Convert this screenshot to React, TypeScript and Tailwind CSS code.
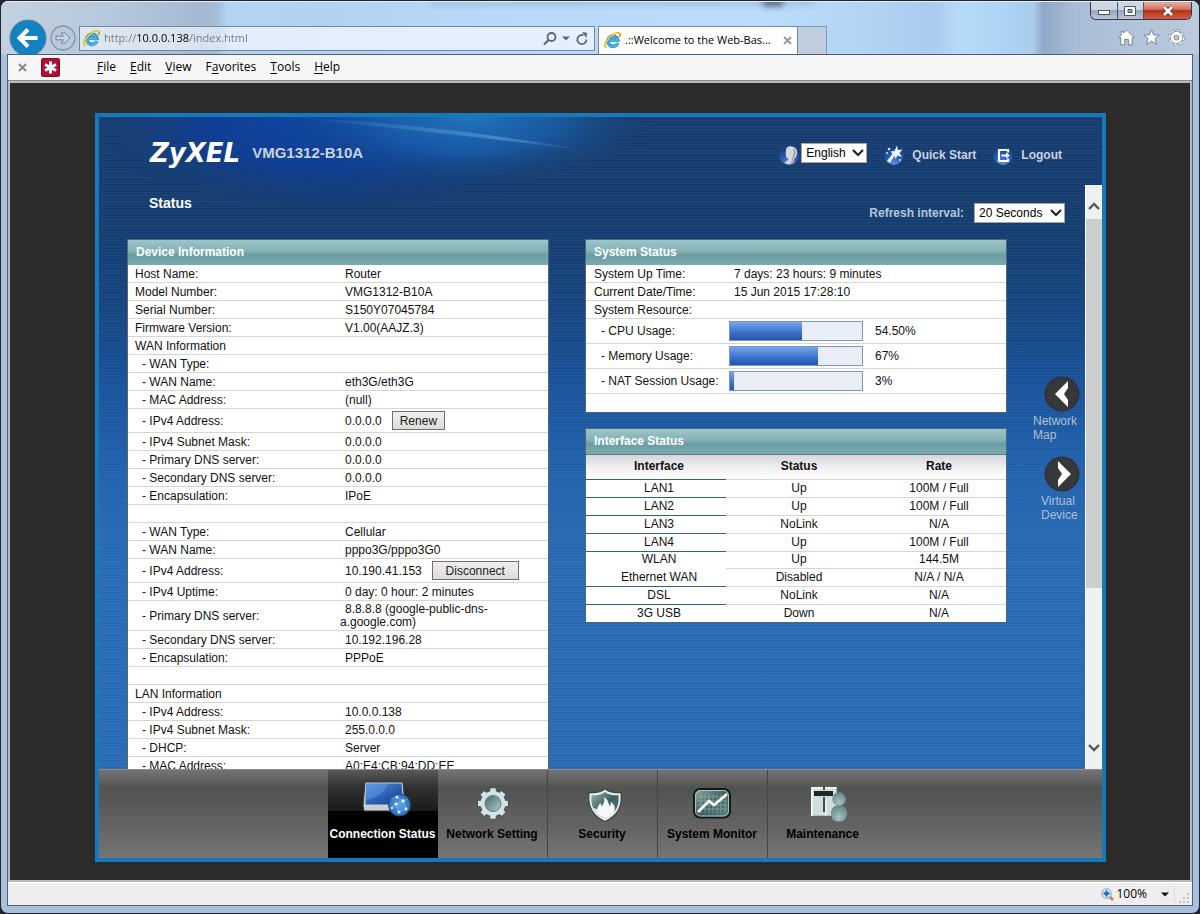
import type { ReactNode } from "react";

const rowLine = "border-b border-[#d6d6d6]";

function IELogo({ size = 20 }: { size?: number }) {
  return (
    <svg width={size} height={size} viewBox="0 0 20 20" aria-hidden="true" className="shrink-0">
      <path d="M16.2 12.8A6 6 0 1 1 16.3 9.6H6.2" fill="none" stroke="#1878b8" strokeWidth="4" />
      <path d="M16 12.8A6 6 0 1 1 16 9.8H6" fill="none" stroke="#48b4e8" strokeWidth="2.6" />
      <path
        d="M3.2 18.6C-.6 17.4 1.6 10.8 7 5.8C11.6 1.6 17.4-.2 18.6 2.2C19.2 3.4 18.8 5 18.2 6"
        fill="none"
        stroke="#c99a1c"
        strokeWidth="2"
      />
      <path
        d="M3.2 18.4C-.2 17.2 2 10.8 7.2 6C11.8 1.9 17.2.2 18.3 2.4"
        fill="none"
        stroke="#fbd53c"
        strokeWidth="1.4"
      />
    </svg>
  );
}

function Browser({ children }: { children: ReactNode }) {
  const menus: [string, string, string][] = [
    ["", "F", "ile"],
    ["", "E", "dit"],
    ["", "V", "iew"],
    ["F", "a", "vorites"],
    ["", "T", "ools"],
    ["", "H", "elp"],
  ];
  return (
    <div className="h-screen bg-[#20242e]">
      <div className="flex h-full flex-col overflow-hidden rounded-lg border border-[#20242e] bg-[#a9c1dc] font-['Open_Sans','Noto_Sans',sans-serif] text-[11px] text-black">
        <header className="relative flex h-[53px] shrink-0 overflow-hidden border-t border-[#e4eef8] bg-[linear-gradient(90deg,#c3d1df_0px,#b6c8dc_110px,#a3b9d2_205px,#a5bfda_217px,#b3d3f2_226px,#b2d2f2_330px,#b7d8f8_480px,#bbdcfb_760px,#b4d6f6_850px,#a9cbee_930px,#b6dafa_960px,#acd0f1_1020px,#a8caea_1033px,#8fa8c8_1042px,#a9bdd6_1075px,#bccbdd_1199px)] pl-[8px] pr-[7px]">
          <div className="absolute -top-1 left-[430px] h-2 w-96 bg-[#6a86a8] opacity-25 blur-[3px]" />
          <div className="absolute -top-1 left-[762px] h-2 w-5 bg-black opacity-50 blur-[3px]" />
          <button aria-label="Back" className="relative mt-[17px] size-[38px] shrink-0">
            <svg width="38" height="38" viewBox="0 0 38 38">
              <circle cx="19" cy="19" r="18" fill="#1183c2" stroke="#5f7f9e" strokeWidth="1" />
              <path d="M28.500 19H11.500M19 10.500L10.500 19L19 27.500" fill="none" stroke="#fff" strokeWidth="4" />
            </svg>
          </button>
          <button aria-label="Forward" className="relative ml-[3px] mt-[23px] size-[26px] shrink-0">
            <svg width="26" height="26" viewBox="0 0 26 26">
              <circle cx="13" cy="13" r="12" fill="#b9c9db" stroke="#8596ab" strokeWidth="1.4" />
              <path d="M6 11.200H13.500L11 8H15L20 13L15 18H11L13.500 14.800H6Z" fill="#c9d5e3" stroke="#73849b" strokeWidth="1" />
            </svg>
          </button>
          <form className="relative ml-[3px] mt-[24px] flex h-[25px] min-w-0 flex-1 items-center border border-[#7189a8] bg-[linear-gradient(90deg,#dee6ef_0px,#d9e3ef_140px,#e3eefa_150px,#e5f0fc_100%)] pl-[3px] pr-1">
            <IELogo size={17} />
            <input
              aria-label="Address"
              defaultValue="http://10.0.0.138/index.html"
              className="ml-1 min-w-0 flex-1 bg-[linear-gradient(90deg,#70777f_32px,#000_32px,#000_85px,#70777f_85px)] bg-clip-text text-[11px] text-transparent outline-none"
            />
            <button type="button" aria-label="Search" className="flex items-center gap-1">
              <svg width="16" height="16" viewBox="0 0 16 16">
                <circle cx="9.500" cy="6" r="4" fill="none" stroke="#5c6874" strokeWidth="1.800" />
                <path d="M6.500 9L2 13.500" stroke="#5c6874" strokeWidth="2.200" />
              </svg>
              <svg width="8" height="5" viewBox="0 0 8 5">
                <path d="M0 .5H8L4 4.500Z" fill="#5c6874" />
              </svg>
            </button>
            <button type="button" aria-label="Refresh" className="ml-1">
              <svg width="16" height="16" viewBox="0 0 16 16">
                <path d="M12.500 8.500A4.600 4.600 0 1 1 9.500 4.200" fill="none" stroke="#5c6874" strokeWidth="1.800" />
                <path d="M8 1L13 1.800L12.500 7Z" fill="#5c6874" />
              </svg>
            </button>
          </form>
          <div className="relative ml-[3px] mt-[24px] flex w-[200px] shrink-0 items-center border border-b-0 border-[#7189a8] bg-[#fdfdfe] px-[5px]">
            <IELogo size={17} />
            <span className="ml-1 flex-1 whitespace-nowrap text-[11px]">.::Welcome to the Web-Bas...</span>
            <button aria-label="Close tab">
              <svg width="9" height="9" viewBox="0 0 9 9">
                <path d="M1 1L8 8M8 1L1 8" stroke="#9a9a9a" strokeWidth="2" />
              </svg>
            </button>
          </div>
          <button aria-label="New tab" className="relative mt-[24px] w-[29px] shrink-0 border border-b-0 border-l-0 border-[#8298b3] bg-[#bfcddc]" />
          <div className="relative flex w-[365px] shrink-0 flex-col items-end">
            <div className="flex h-[18px] w-[102px] overflow-hidden rounded-b-md border border-t-0 border-[#31394a]">
              <button aria-label="Minimize" className="flex flex-1 items-center justify-center border-r border-[#4a5568] bg-[linear-gradient(#cdd7e4_45%,#96a6bd_50%,#b8c6d8)]">
                <svg width="12" height="12" viewBox="0 0 12 12">
                  <rect x=".5" y="5.500" width="11" height="4" fill="#fff" stroke="#4b5566" />
                </svg>
              </button>
              <button aria-label="Maximize" className="flex flex-1 items-center justify-center border-r border-[#4a5568] bg-[linear-gradient(#cdd7e4_45%,#96a6bd_50%,#b8c6d8)]">
                <svg width="12" height="12" viewBox="0 0 12 12">
                  <path d="M.5 1.500H11.500V10.500H.5ZM4 4.500V7.500H8V4.500Z" fill="#fff" fillRule="evenodd" stroke="#4b5566" />
                </svg>
              </button>
              <button aria-label="Close" className="flex w-[47px] items-center justify-center bg-[linear-gradient(#e0a596_10%,#cf6e58_45%,#b8311a_50%,#d15a41)]">
                <svg width="14" height="12" viewBox="0 0 14 12">
                  <path d="M3 2L11 10M11 2L3 10" stroke="#5a3030" strokeWidth="4.500" />
                  <path d="M3 2L11 10M11 2L3 10" stroke="#fff" strokeWidth="2.800" />
                </svg>
              </button>
            </div>
            <div className="mr-[7px] mt-[9px] flex gap-2">
              <button aria-label="Home">
                <svg width="17" height="17" viewBox="0 0 17 17">
                  <path d="M8.500 1L16.300 8.800H14.200V15.800H10.400V10.500H6.700V15.800H2.800V8.800H.7L3.200 6.300V2.500H5.500V4Z" fill="#fff" stroke="#6c7c92" strokeWidth=".9" />
                </svg>
              </button>
              <button aria-label="Favorites">
                <svg width="17" height="17" viewBox="0 0 17 17">
                  <path d="M8.500 .8L10.800 6H16.300L12 9.500L13.600 15.500L8.500 12L3.400 15.500L5 9.500L.7 6H6.200Z" fill="#fff" stroke="#6c7c92" strokeWidth=".9" />
                </svg>
              </button>
              <button aria-label="Tools">
                <svg width="17" height="17" viewBox="0 0 17 17">
                  <circle cx="8.500" cy="8.500" r="6.800" fill="none" stroke="#76869b" strokeWidth="3.200" strokeDasharray="3.100 2.240" />
                  <circle cx="8.500" cy="8.500" r="6.600" fill="none" stroke="#fff" strokeWidth="2.400" strokeDasharray="2.500 2.683" />
                  <circle cx="8.500" cy="8.500" r="4.300" fill="none" stroke="#76869b" strokeWidth="4.200" />
                  <circle cx="8.500" cy="8.500" r="4.300" fill="none" stroke="#fff" strokeWidth="2.900" />
                </svg>
              </button>
            </div>
          </div>
        </header>
        <div className="mx-[6px] mb-[7px] flex min-h-0 flex-1 flex-col border border-[#4d5f80] bg-[#f5f6f7]">
          <nav aria-label="Menu bar" className="flex h-[26px] shrink-0 items-center border-b border-[#8a8a8a] bg-[#f6f6f7] pl-[10px]">
            <button aria-label="Close toolbar">
              <svg width="9" height="9" viewBox="0 0 9 9">
                <path d="M1 1L8 8M8 1L1 8" stroke="#858585" strokeWidth="1.800" />
              </svg>
            </button>
            <button aria-label="Password manager" className="ml-[14px]">
              <svg width="19" height="19" viewBox="0 0 19 19">
                <rect width="19" height="19" rx="2.500" fill="#7e0a24" />
                <rect x="1" y="1" width="17" height="17" rx="2" fill="#b01036" />
                <path d="M9.500 3.500V15.500M4 6.500L15 12.500M4 12.500L15 6.500" stroke="#fff" strokeWidth="3" />
              </svg>
            </button>
            <ul className="ml-[37px] flex gap-[14px]">
              {menus.map(([pre, key, post]) => (
                <li key={key + post}>
                  <button className="text-[12px] leading-4">
                    {pre}
                    <span className="underline underline-offset-2">{key}</span>
                    {post}
                  </button>
                </li>
              ))}
            </ul>
          </nav>
          <div className="flex min-h-0 flex-1 flex-col border-2 border-[#b9b9b9] bg-[#2b2b2c] bg-[repeating-linear-gradient(0deg,transparent_0_3px,rgba(255,255,255,0.012)_3px_4px),repeating-linear-gradient(90deg,transparent_0_3px,rgba(0,0,0,0.05)_3px_4px)] pb-[18px] pl-[85px] pr-[84px] pt-[30px]">
            {children}
          </div>
          <footer className="flex h-[23px] shrink-0 items-center justify-end border-t border-white bg-[#efeeed] pr-px">
            <svg width="13" height="13" viewBox="0 0 13 13" aria-hidden="true">
              <path d="M8 8L12 12" stroke="#b98a5c" strokeWidth="2.600" />
              <circle cx="5.500" cy="5.500" r="4.800" fill="#d5ebfb" stroke="#7ea7c9" />
              <path d="M5.500 2.500V8.500M2.500 5.500H8.500" stroke="#1266b8" strokeWidth="2" />
            </svg>
            <button className="ml-[2px] flex items-center gap-[14px] text-[12px]">
              100%
              <svg width="8" height="5" viewBox="0 0 8 5">
                <path d="M0 .5H8L4 4.500Z" fill="#111" />
              </svg>
            </button>
            <span className="ml-[5px] h-4 w-px bg-[#dadada]" />
            <svg width="12" height="12" viewBox="0 0 12 12" aria-hidden="true" className="ml-1 mt-2">
              <path d="M8 1h2v2h-2zM8 5h2v2h-2zM8 9h2v2h-2zM4 5h2v2h-2zM4 9h2v2h-2zM0 9h2v2h-2z" fill="#c3c3c3" />
            </svg>
          </footer>
        </div>
      </div>
    </div>
  );
}

function Orb({ id, children }: { id: string; children: ReactNode }) {
  return (
    <svg width="22" height="22" viewBox="0 0 22 22" aria-hidden="true" className="shrink-0">
      <defs>
        <radialGradient id={id} cx=".5" cy=".95" r=".85">
          <stop offset="0" stopColor="#5b8fe0" />
          <stop offset=".5" stopColor="#2b5cb4" />
          <stop offset="1" stopColor="#173f7c" />
        </radialGradient>
      </defs>
      <circle cx="11" cy="11" r="10" fill={`url(#${id})`} />
      {children}
    </svg>
  );
}

function Picker({ id, label, options, width }: { id: string; label?: string; options: string[]; width: string }) {
  return (
    <span className={`relative inline-flex h-5 ${width}`}>
      <select
        id={id}
        aria-label={label}
        className="h-full w-full appearance-none border border-[#a4a4a4] bg-white pl-1 text-[12px] leading-4 font-normal text-black"
      >
        {options.map((o) => (
          <option key={o}>{o}</option>
        ))}
      </select>
      <svg width="12" height="8" viewBox="0 0 12 8" className="pointer-events-none absolute right-[3px] top-[6px]">
        <path d="M1 1L6 6L11 1" fill="none" stroke="#222" strokeWidth="2.200" />
      </svg>
    </span>
  );
}

function Swoosh() {
  return (
    <svg className="pointer-events-none absolute left-0 top-0" width="560" height="110" viewBox="0 0 560 110" aria-hidden="true">
      <defs>
        <radialGradient id="glowDeep" cx=".45" cy="0" r=".5" gradientTransform="scale(1 1.9)">
          <stop offset="0" stopColor="#0f48ab" />
          <stop offset=".5" stopColor="#0f3e98" stopOpacity=".85" />
          <stop offset="1" stopColor="#163e70" stopOpacity="0" />
        </radialGradient>
        <radialGradient id="glowLight" cx=".5" cy="0" r=".5" gradientTransform="scale(1 1.9)">
          <stop offset="0" stopColor="#2176bd" />
          <stop offset=".5" stopColor="#1960ac" stopOpacity=".75" />
          <stop offset="1" stopColor="#163e70" stopOpacity="0" />
        </radialGradient>
        <linearGradient id="streak">
          <stop offset="0" stopColor="#6cabdb" stopOpacity="0" />
          <stop offset=".7" stopColor="#6cabdb" stopOpacity=".5" />
          <stop offset="1" stopColor="#6cabdb" stopOpacity="0" />
        </linearGradient>
      </defs>
      <rect x="0" y="0" width="520" height="110" fill="url(#glowDeep)" />
      <rect x="180" y="0" width="380" height="75" fill="url(#glowLight)" />
      <path d="M190 0C270 4 370 12 490 34C370 19 270 8 190 0Z" fill="url(#streak)" />
    </svg>
  );
}

function Panel({ title, children }: { title: string; children: ReactNode }) {
  return (
    <section className="border border-[#4a6a7c] bg-white">
      <h2 className="flex h-[25px] items-center bg-[linear-gradient(#9cc6c9_0%,#85b1b5_45%,#6a9da2_60%,#7cabaf_100%)] pb-[2px] pl-2 text-[12px] leading-4 font-bold text-white">
        {title}
      </h2>
      {children}
    </section>
  );
}

const btn = "ml-[10px] h-[19px] border border-[#6f6f6f] bg-[linear-gradient(#efefef,#dcdcdc)] px-[7px] text-[12px] leading-4 indent-0 text-[#222]";

type Row = { label: string; value?: ReactNode; sub?: boolean; height?: string };

const deviceRows: Row[] = [
  { label: "Host Name:", value: "Router" },
  { label: "Model Number:", value: "VMG1312-B10A" },
  { label: "Serial Number:", value: "S150Y07045784" },
  { label: "Firmware Version:", value: "V1.00(AAJZ.3)" },
  { label: "WAN Information" },
  { label: "- WAN Type:", sub: true },
  { label: "- WAN Name:", value: "eth3G/eth3G", sub: true },
  { label: "- MAC Address:", value: "(null)", sub: true },
  {
    label: "- IPv4 Address:",
    value: (
      <>
        0.0.0.0<button className={btn}>Renew</button>
      </>
    ),
    sub: true,
    height: "h-[24px]",
  },
  { label: "- IPv4 Subnet Mask:", value: "0.0.0.0", sub: true },
  { label: "- Primary DNS server:", value: "0.0.0.0", sub: true },
  { label: "- Secondary DNS server:", value: "0.0.0.0", sub: true },
  { label: "- Encapsulation:", value: "IPoE", sub: true },
  { label: "" },
  { label: "- WAN Type:", value: "Cellular", sub: true },
  { label: "- WAN Name:", value: "pppo3G/pppo3G0", sub: true },
  {
    label: "- IPv4 Address:",
    value: (
      <>
        10.190.41.153<button className={`${btn} w-[87px]`}>Disconnect</button>
      </>
    ),
    sub: true,
    height: "h-[24px]",
  },
  { label: "- IPv4 Uptime:", value: "0 day: 0 hour: 2 minutes", sub: true },
  {
    label: "- Primary DNS server:",
    value: <div className="w-[160px] leading-[13px]">8.8.8.8 (google-public-dns-a.google.com)</div>,
    sub: true,
    height: "h-[30px]",
  },
  { label: "- Secondary DNS server:", value: "10.192.196.28", sub: true },
  { label: "- Encapsulation:", value: "PPPoE", sub: true },
  { label: "" },
  { label: "LAN Information" },
  { label: "- IPv4 Address:", value: "10.0.0.138", sub: true },
  { label: "- IPv4 Subnet Mask:", value: "255.0.0.0", sub: true },
  { label: "- DHCP:", value: "Server", sub: true },
  { label: "- MAC Address:", value: "A0:E4:CB:94:DD:EE", sub: true },
];

function DeviceTable() {
  return (
    <table className="w-full border-separate border-spacing-0 text-[12px] leading-4 text-[#111]">
      <tbody>
        {deviceRows.map((r, i) => (
          <tr key={i}>
            <th
              scope="row"
              className={`${rowLine} ${r.height ?? "h-[18px]"} w-[212px] text-left font-normal ${r.sub ? "pl-[14px]" : "pl-[7px]"}`}
            >
              {r.label}
            </th>
            <td className={`${rowLine} indent-[5px]`}>{r.value}</td>
          </tr>
        ))}
      </tbody>
    </table>
  );
}

const usage = [
  { label: "- CPU Usage:", percent: 54.5, text: "54.50%" },
  { label: "- Memory Usage:", percent: 67, text: "67%" },
  { label: "- NAT Session Usage:", percent: 3, text: "3%" },
];

function SystemTable() {
  return (
    <table className="w-full border-separate border-spacing-0 text-[12px] leading-4 text-[#111]">
      <tbody>
        {[
          ["System Up Time:", "7 days: 23 hours: 9 minutes"],
          ["Current Date/Time:", "15 Jun 2015 17:28:10"],
          ["System Resource:", ""],
        ].map(([label, value]) => (
          <tr key={label}>
            <th scope="row" className={`${rowLine} h-[18px] w-[143px] pl-2 text-left font-normal`}>
              {label}
            </th>
            <td className={`${rowLine} pl-[5px]`}>{value}</td>
          </tr>
        ))}
        {usage.map((u) => (
          <tr key={u.label}>
            <th scope="row" className={`${rowLine} h-[25px] w-[143px] pl-[15px] text-left font-normal`}>
              {u.label}
            </th>
            <td className={rowLine}>
              <div className="flex items-center gap-3">
                <div className="h-5 w-[134px] border border-[#7d97c0] bg-[#e9eef6]">
                  <div
                    className="h-full bg-[linear-gradient(#76a5ef,#3f74cc_55%,#2355ab)]"
                    style={{ width: `${u.percent}%` }}
                  />
                </div>
                <span>{u.text}</span>
              </div>
            </td>
          </tr>
        ))}
        <tr>
          <td colSpan={2} className="h-[18px]" />
        </tr>
      </tbody>
    </table>
  );
}

const interfaces = [
  ["LAN1", "Up", "100M / Full"],
  ["LAN2", "Up", "100M / Full"],
  ["LAN3", "NoLink", "N/A"],
  ["LAN4", "Up", "100M / Full"],
  ["WLAN", "Up", "144.5M"],
  ["Ethernet WAN", "Disabled", "N/A / N/A"],
  ["DSL", "NoLink", "N/A"],
  ["3G USB", "Down", "N/A"],
];

function InterfaceTable() {
  return (
    <table className="w-full table-fixed border-separate border-spacing-0 text-center text-[12px] leading-[14px] text-[#111]">
      <thead>
        <tr className="bg-[linear-gradient(#d3d5d8,#f4f4f5_60%,#fff)]">
          {["Interface", "Status", "Rate"].map((h, i) => (
            <th
              key={h}
              scope="col"
              className={`h-[26px] border-b border-t border-t-[#5c7f83] pb-[2px] pl-[6px] font-bold ${i === 0 ? "border-b-[#2f6384]" : "border-b-[#d6d6d6]"}`}
            >
              {h}
            </th>
          ))}
        </tr>
      </thead>
      <tbody>
        {interfaces.map(([name, status, rate], r) => {
          const last = r === interfaces.length - 1;
          const height = name === "WLAN" || last ? "h-[17px]" : "h-[18px]";
          const firstLine = last ? "" : name === "WLAN" ? "border-b border-white" : "border-b border-[#2f6384]";
          const line = last ? "" : rowLine;
          return (
            <tr key={name}>
              <td className={`${height} ${firstLine} pb-[2px] pl-[6px]`}>{name}</td>
              <td className={`${line} pb-[2px] pl-[6px]`}>{status}</td>
              <td className={`${line} pb-[2px] pl-[6px]`}>{rate}</td>
            </tr>
          );
        })}
      </tbody>
    </table>
  );
}

function SideButton({ label, path, width }: { label: string; path: string; width: string }) {
  return (
    <button className="flex w-[47px] flex-col items-end text-[12px] leading-[14px] text-[#b3bfd0]">
      <svg width="36" height="36" viewBox="0 0 36 36" aria-hidden="true">
        <circle cx="18" cy="18" r="17.500" fill="#303236" />
        <circle cx="18" cy="18" r="16" fill="#36383b" />
        <path d={path} fill="#fff" />
      </svg>
      <span className={`mt-[2px] text-left ${width}`}>{label}</span>
    </button>
  );
}

function ScrollBar() {
  return (
    <div className="flex w-[17px] shrink-0 flex-col border-l border-white bg-[#f0f0f0]" aria-hidden="true">
      <div className="flex h-[34px] items-center justify-center pt-2">
        <svg width="14" height="10" viewBox="0 0 14 10">
          <path d="M2 8L7 3L12 8" fill="none" stroke="#555" strokeWidth="2.400" />
        </svg>
      </div>
      <div className="grow-[370] bg-[#cdcdcd]" />
      <div className="grow-[147]" />
      <div className="flex h-[34px] items-center justify-center pb-2">
        <svg width="14" height="10" viewBox="0 0 14 10">
          <path d="M2 2L7 7L12 2" fill="none" stroke="#555" strokeWidth="2.400" />
        </svg>
      </div>
    </div>
  );
}

const gearTeeth = [0, 45, 90, 135, 180, 225, 270, 315];

const tabs: { label: string; icon: ReactNode }[] = [
  {
    label: "Connection Status",
    icon: (
      <>
        <path d="M10 3L48 3L50 27L45 32H9L8 27Z" fill="#c9cfd6" stroke="#333" />
        <path d="M11 4.500H46.500L48 25.500H10.500Z" fill="url(#screen)" />
        <path d="M11 4.500H34C29 14 21 19 10.700 21Z" fill="#79acf0" opacity=".35" />
        <circle cx="44.500" cy="26" r="11" fill="url(#globe)" stroke="#234a80" />
        <path d="M36 20L42 18L48 22L53 20M36 29L41 25L48 22L51 30L44 33L41 25" fill="none" stroke="#9fd0fa" strokeWidth=".5" />
        <g fill="#e6f5ff">
          <circle cx="42" cy="18" r="1.500" />
          <circle cx="48" cy="22" r="1.700" />
          <circle cx="41" cy="25" r="1.600" />
          <circle cx="37" cy="29" r="1.200" />
          <circle cx="51" cy="30" r="1.400" />
          <circle cx="44" cy="33" r="1.500" />
        </g>
      </>
    ),
  },
  {
    label: "Network Setting",
    icon: (
      <g transform="translate(29 24.500)">
        <g fill="#d5e2e3" stroke="#475456" strokeWidth="1.200">
          {gearTeeth.map((a) => (
            <path key={a} d="M-3.800-10L-2.900-15.500H2.900L3.800-10Z" transform={`rotate(${a})`} />
          ))}
          <circle r="13" />
        </g>
        <g fill="#d5e2e3">
          {gearTeeth.map((a) => (
            <path key={a} d="M-3.300-9L-2.500-14.900H2.500L3.300-9Z" transform={`rotate(${a})`} />
          ))}
        </g>
        <circle r="8" fill="url(#hub)" stroke="#5f7d82" />
      </g>
    ),
  },
  {
    label: "Security",
    icon: (
      <>
        <path d="M31 9.500C34 12.500 40 14 47 13.500C48.500 25 46 36 31 42.500C16 36 13.500 25 15 13.500C22 14 28 12.500 31 9.500Z" fill="#e4eeee" stroke="#38423f" strokeWidth="1.200" />
        <path d="M31 13C34 15.500 39 16.600 44.500 16.300C45.300 26 43 34 31 39.500C19 34 16.700 26 17.500 16.300C23 16.600 28 15.500 31 13Z" fill="url(#teal)" />
        <path d="M30 18C35 21 34 25 36 27C37 25 37 24 36.500 22.500C40 25 42 29 40 33C38 36 34 38.500 31 39.500C26 37 21.500 34 19.500 28.500C21 29 22 30 23 31C23 28 25 26.500 26 24C27 25 27.500 26 27.500 27.500C30 25 31 22 30 18Z" fill="#f4f9f8" />
      </>
    ),
  },
  {
    label: "System Monitor",
    icon: (
      <>
        <rect x="10" y="10" width="36" height="28.500" rx="6" fill="url(#teal)" stroke="#111a19" strokeWidth="2" />
        <rect x="11.500" y="11.500" width="33" height="25.500" rx="5" fill="none" stroke="#a9c3c0" strokeWidth="1" />
        <path d="M17 15V34M21 15V34M25 15V34M29 15V34M33 15V34M37 15V34M41 15V34M14 18H43M14 22H43M14 26H43M14 30H43" stroke="#8fb0ad" strokeWidth=".7" />
        <path d="M14 33L25 22L30 26L43 15" fill="none" stroke="#fff" strokeWidth="2.600" />
      </>
    ),
  },
  {
    label: "Maintenance",
    icon: (
      <>
        <path d="M16 8H42V37H16Z" fill="#cfdddc" stroke="#5f6c6b" strokeWidth=".6" />
        <path d="M16 8H42L40 10H18V37H16Z" fill="#eef5f4" />
        <rect x="19" y="12" width="19" height="5" fill="#1d2727" />
        <path d="M29 8V11M29 18V33" stroke="#3e4b4b" strokeWidth="2" />
        <path d="M31 22V37" stroke="#fff" />
        <path d="M36 34C36 29 39 26.500 44 26.500C49 26.500 52 29 52 34C52 40 49 42.500 44 42.500C39 42.500 36 40 36 34Z" fill="url(#person)" />
        <circle cx="44" cy="20" r="6.800" fill="url(#person)" />
      </>
    ),
  },
];

function NavBar() {
  return (
    <nav
      aria-label="Main"
      className="relative flex h-[89px] shrink-0 justify-center border-t border-[#8b8b8b] bg-[linear-gradient(#747474_0%,#525452_20%,#545654_30%,#646464_65%,#757575_100%)] pl-1"
    >
      <svg width="0" height="0" className="absolute" aria-hidden="true">
        <defs>
          <linearGradient id="screen" x2="1" y2="1">
            <stop offset="0" stopColor="#4d8de4" />
            <stop offset="1" stopColor="#123b87" />
          </linearGradient>
          <radialGradient id="globe">
            <stop offset="0" stopColor="#5ba5ec" />
            <stop offset="1" stopColor="#2f6db9" />
          </radialGradient>
          <linearGradient id="hub" x2="1" y2="1">
            <stop offset="0" stopColor="#48676d" />
            <stop offset="1" stopColor="#a7cdd2" />
          </linearGradient>
          <linearGradient id="teal" x2="1" y2="1">
            <stop offset="0" stopColor="#93b2ae" />
            <stop offset=".5" stopColor="#3f5f5e" />
            <stop offset="1" stopColor="#5c8481" />
          </linearGradient>
          <radialGradient id="person" cx=".5" cy=".75" r=".7">
            <stop offset="0" stopColor="#a3c2c1" />
            <stop offset="1" stopColor="#688a8a" />
          </radialGradient>
        </defs>
      </svg>
      {tabs.map(({ label, icon }, i) => (
        <a
          key={label}
          href="#"
          aria-current={i === 0 ? "page" : undefined}
          className={`flex w-[110px] flex-col items-center pt-[9px] text-[12px] leading-4 font-bold whitespace-nowrap ${
            i === 0
              ? "bg-[linear-gradient(#5a5a5a_0%,#333_18%,#1b1b1b_46%,#000_47%)] text-white"
              : i < 4
                ? "border-r border-[#454545] text-black"
                : "text-black"
          }`}
        >
          <svg width="56" height="44" viewBox="0 0 56 44" aria-hidden="true">
            {icon}
          </svg>
          <span className="mt-[3px]">{label}</span>
        </a>
      ))}
    </nav>
  );
}

export default function App() {
  return (
    <Browser>
      <div className="relative flex min-h-0 flex-1 flex-col overflow-hidden border-4 border-[#1879b8] bg-[repeating-linear-gradient(0deg,transparent_0_2px,rgba(255,255,255,0.03)_2px_3px),linear-gradient(#183d70_0px,#153e71_110px,#174580_190px,#1a549c_270px,#2465b0_370px,#286bb4_450px)] font-['Liberation_Sans',Arial,sans-serif]">
        <Swoosh />
        <header className="relative flex h-[68px] shrink-0 items-center pl-[51px] pr-[40px] pt-1 text-[12px] font-bold text-[#c9d3e0]">
          <span className="font-['DejaVu_Sans',sans-serif] text-[26px] leading-8 font-bold text-white italic">ZyXEL</span>
          <span className="ml-3 text-[15px] leading-5">VMG1312-B10A</span>
          <div className="ml-auto flex items-center pt-1">
            <Orb id="orbUser">
              <path d="M8 6C8 3 11 1.500 14 2.500C19 3 20 8 18.500 12L16 15.500V19C12 20.500 9 20.500 6.500 19C7.500 17 10.500 17 10.500 15C8 14 7.500 11 8 6Z" fill="#d6d7d6" />
              <path d="M15.500 4C19 6 18 12 15 15L16 19.500L12.500 20C14 18 13.500 15 15 12C16 9 15.800 6 15.500 4Z" fill="#9a9fa6" />
            </Orb>
            <span className="-mt-1 ml-px inline-flex">
              <Picker id="language" label="Language" options={["English"]} width="w-[66px]" />
            </span>
            <a href="#" className="ml-4 flex items-center gap-[7px]">
              <Orb id="orbQuick">
                <path d="M14 1.500L15 6L19.500 5.500L16.500 9L19 13L14.800 11.600L12 15L11.500 11.600L7 19L4 17L9.500 10L7.500 7.500L11.500 7Z" fill="#eef3fb" />
                <circle cx="6" cy="5" r="1.300" fill="#d6e2f6" />
                <circle cx="4" cy="9" r="1" fill="#d6e2f6" />
                <circle cx="17" cy="16" r="1" fill="#d6e2f6" />
              </Orb>
              Quick Start
            </a>
            <a href="#" className="ml-4 flex items-center gap-[7px]">
              <Orb id="orbOut">
                <path d="M16 8.500V6H7V17H16V14.500" fill="none" stroke="#fff" strokeWidth="2.200" />
                <path d="M9.500 11.500H15" stroke="#fff" strokeWidth="2" />
                <path d="M14 8.500L18 11.500L14 14.500Z" fill="#fff" />
              </Orb>
              Logout
            </a>
          </div>
        </header>
        <div className="relative flex min-h-0 flex-1">
          <main className="min-w-0 flex-1 overflow-hidden pl-7">
            <div className="flex h-[54px] justify-between pl-[22px] pr-[20px]">
              <h1 className="mt-[9px] text-[14px] leading-[18px] font-bold text-white">Status</h1>
              <div className="mt-[18px] flex h-5 items-center gap-[10px] text-[12px] font-bold text-[#b9c6d6]">
                <label htmlFor="refresh">Refresh interval:</label>
                <Picker id="refresh" options={["20 Seconds"]} width="w-[91px]" />
              </div>
            </div>
            <div className="flex items-start">
              <div className="grid min-w-0 flex-1 grid-cols-2 items-start gap-9">
                <Panel title="Device Information">
                  <DeviceTable />
                </Panel>
                <div className="flex flex-col gap-[15px]">
                  <Panel title="System Status">
                    <SystemTable />
                  </Panel>
                  <Panel title="Interface Status">
                    <InterfaceTable />
                  </Panel>
                </div>
              </div>
              <aside className="flex w-[78px] flex-col items-end gap-[14px] pr-[5px] pt-[137px]">
                <SideButton label="Network Map" path="M24 5L11 18L24 31V24L20 18L24 12Z" width="w-[47px]" />
                <SideButton label="Virtual Device" path="M14 5V12L18 18L14 24V31L27 18Z" width="w-[39px]" />
              </aside>
            </div>
          </main>
          <ScrollBar />
        </div>
        <NavBar />
      </div>
    </Browser>
  );
}
